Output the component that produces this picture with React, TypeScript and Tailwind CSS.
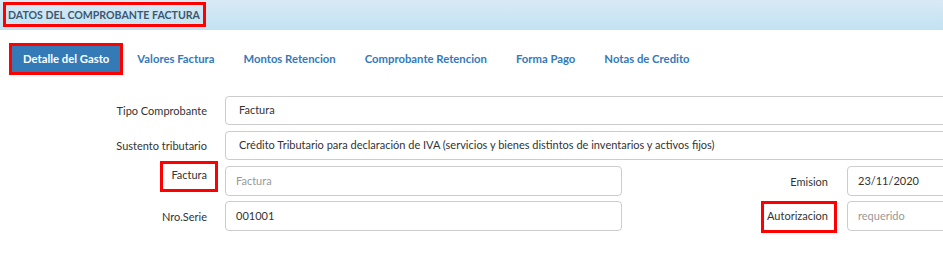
import React from 'react';

const tabs = ['Valores Factura', 'Montos Retencion', 'Comprobante Retencion', 'Forma Pago', 'Notas de Credito'];

// red annotation box drawn over a label
const Marked: React.FC<{ children: React.ReactNode; className: string }> = ({ children, className }) => (
  <span className="relative inline-block">
    {children}
    <span className={`pointer-events-none absolute border-[3px] border-[#ff0000] ${className}`} />
  </span>
);

const inputBase = 'shrink-0 h-full rounded-[4px] border border-[#cccccc] bg-white flex items-center text-[11px]';
const labelBase = 'shrink-0 text-right text-[11px]';

export default function App() {
  return (
    <div className="w-[943px] h-[254px] overflow-hidden bg-white text-[#333] font-['Lato','Open_Sans',sans-serif]">
      {/* Header */}
      <div className="h-[30px] bg-gradient-to-b from-[#d8eaf5] to-[#c2e2f1] pl-[8px] pb-[1px] flex items-center">
        <Marked className="-left-[5px] -right-[6px] -top-[5px] -bottom-[4px]">
          <span className="block leading-[16px] text-[10.6px] font-bold text-[#3b5873]">DATOS DEL COMPROBANTE FACTURA</span>
        </Marked>
      </div>

      {/* Tabs */}
      <div className="flex items-center mt-[13px] pl-[9px] h-[32px]">
        <div className="h-[32px] border-[3px] border-[#ff0000] bg-[#337ab7] px-[11px] flex items-center">
          <span className="text-[11.3px] font-bold text-white">Detalle del Gasto</span>
        </div>
        <div className="flex items-center pl-[14px] gap-[29px]">
          {tabs.map(t => (
            <span key={t} className="text-[11.3px] font-bold text-[#337ab7]">{t}</span>
          ))}
        </div>
      </div>

      {/* Form */}
      <div className="mt-[21px] flex flex-col">
        <div className="flex h-[29px]">
          <label className={`${labelBase} w-[207px] pt-[7px]`}>Tipo Comprobante</label>
          <div className={`${inputBase} ml-[18px] w-[760px] pl-[13px]`}>Factura</div>
        </div>
        <div className="flex h-[29px] mt-[6px]">
          <label className={`${labelBase} w-[207px] pt-[7px]`}>Sustento tributario</label>
          <div className={`${inputBase} ml-[18px] w-[760px] pl-[13px]`}>
            Crédito Tributario para declaración de IVA (servicios y bienes distintos de inventarios y activos fijos)
          </div>
        </div>
        <div className="flex h-[30px] mt-[6px]">
          <label className={`${labelBase} w-[207px] pt-[1px]`}>
            <Marked className="-left-[11px] -right-[11px] -top-[6px] -bottom-[8px]">Factura</Marked>
          </label>
          <div className={`${inputBase} ml-[18px] w-[397px] pl-[10px] text-[#999]`}>Factura</div>
          <label className={`${labelBase} w-[206px] pt-[8px]`}>Emision</label>
          <div className={`${inputBase} ml-[19px] w-[200px] pl-[10px]`}>23/11/2020</div>
        </div>
        <div className="flex h-[30px] mt-[5px]">
          <label className={`${labelBase} w-[207px] pt-[8px]`}>Nro.Serie</label>
          <div className={`${inputBase} ml-[18px] w-[397px] pl-[10px]`}>001001</div>
          <label className={`${labelBase} w-[206px] pt-[7px]`}>
            <Marked className="-left-[6px] -right-[9px] -top-[7px] -bottom-[8px]">Autorizacion</Marked>
          </label>
          <div className={`${inputBase} ml-[19px] w-[200px] pl-[10px] text-[#999]`}>requerido</div>
        </div>
      </div>
    </div>
  );
}
